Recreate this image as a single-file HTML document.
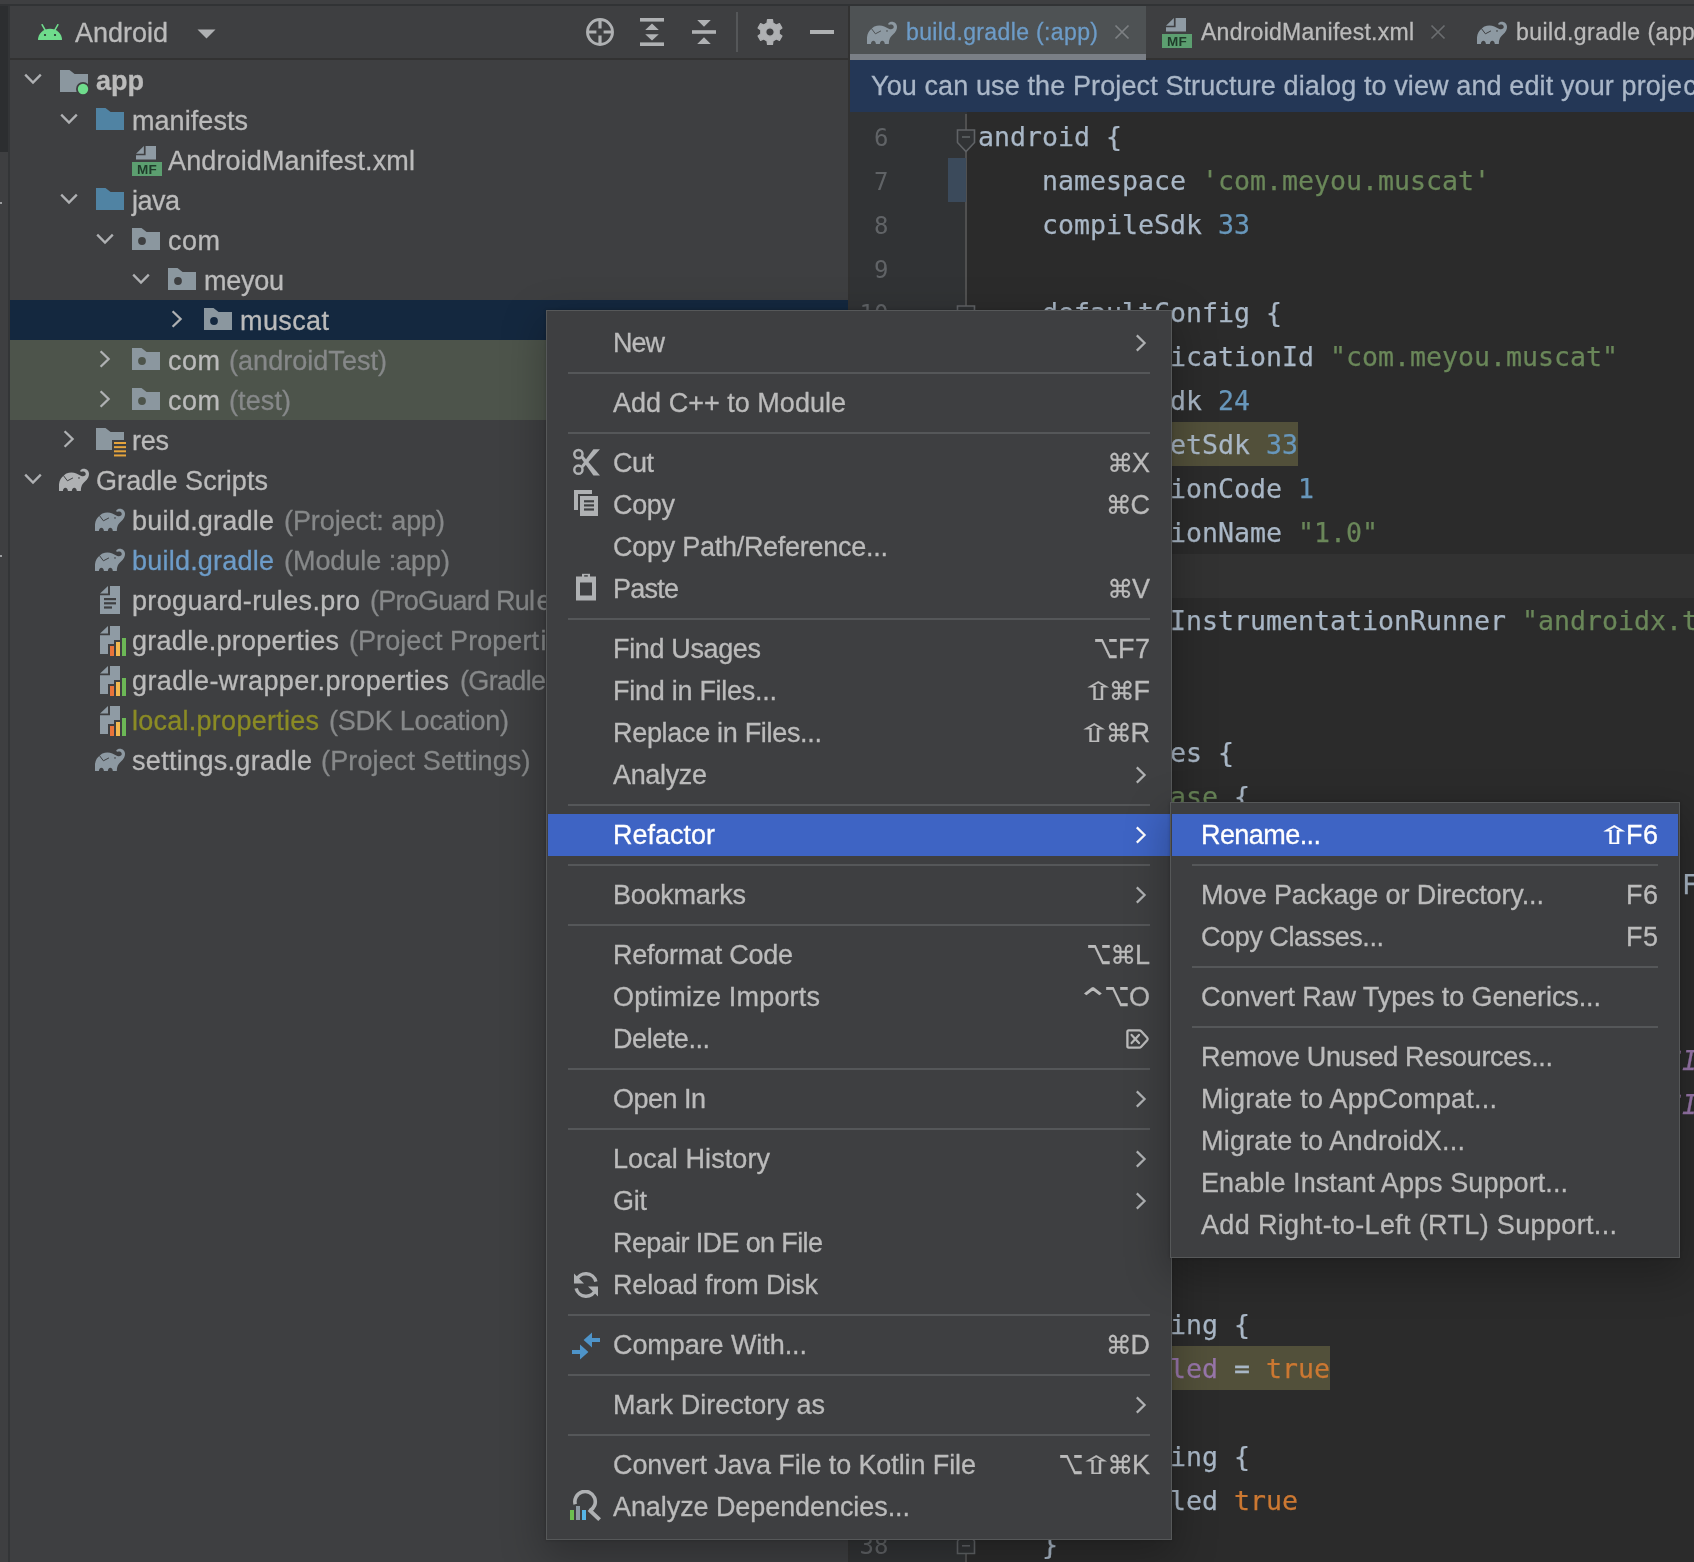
<!DOCTYPE html>
<html lang="en"><head><meta charset="utf-8"><title>Android Studio</title>
<style>
html,body{margin:0;padding:0;background:#3e3f41;}
#root{position:relative;width:1694px;height:1562px;overflow:hidden;background:#3e3f41;font-family:"Liberation Sans","DejaVu Sans",sans-serif;will-change:transform;}
.r{position:absolute;display:block}
.t{position:absolute;white-space:pre;font-family:"Liberation Sans","DejaVu Sans",sans-serif;-webkit-text-stroke:0.3px currentColor;}
.m{font-family:"DejaVu Sans Mono","Liberation Mono",monospace;-webkit-text-stroke:0.25px currentColor;}
.k{display:inline-block;text-align:center;letter-spacing:0;font-size:26px;font-family:"DejaVu Sans",sans-serif;-webkit-text-stroke:0.2px currentColor}
.clip{position:absolute;overflow:hidden}
</style></head>
<body><div id="root">
<div class="r" style="left:0px;top:0px;width:1694px;height:4px;background:#3e3f41;"></div>
<div class="r" style="left:0px;top:4px;width:1694px;height:2px;background:#313335;"></div>
<div class="r" style="left:0px;top:6px;width:8px;height:146px;background:#2c2e30;"></div>
<div class="r" style="left:0px;top:152px;width:8px;height:1410px;background:#3e3f41;"></div>
<div class="r" style="left:8px;top:6px;width:2px;height:1556px;background:#333537;"></div>
<div class="r" style="left:0px;top:202px;width:2px;height:2px;background:#9a9c9e;"></div>
<div class="r" style="left:0px;top:555px;width:2px;height:2px;background:#9a9c9e;"></div>
<div class="r" style="left:10px;top:6px;width:838px;height:1556px;background:#3e3f41;"></div>
<div class="r" style="left:10px;top:58px;width:838px;height:2px;background:#323232;"></div>
<div class="r" style="left:848px;top:6px;width:2px;height:1556px;background:#323232;"></div>
<svg class="r" style="left:38px;top:24px" width="24" height="17" viewBox="0 0 24 17"><path d="M0 16 A12 11.2 0 0 1 24 16 Z" fill="#6fdc8c"/><path d="M4.2 0.8 L7.6 6.8 M19.8 0.8 L16.4 6.8" stroke="#6fdc8c" stroke-width="1.6" stroke-linecap="round"/><circle cx="7" cy="11" r="1.1" fill="#2a2d2f"/><circle cx="17" cy="11" r="1.1" fill="#2a2d2f"/></svg>
<span id="t1" class="t " style="left:75px;top:7px;height:52px;line-height:52px;font-size:27px;color:#bbbbbb;letter-spacing:-0.013px;">Android</span>
<svg class="r" style="left:197px;top:29px" width="20" height="10" viewBox="0 0 20 10"><path d="M0.5 0.5 H18.5 L9.5 9.5 Z" fill="#afb1b3"/></svg>
<svg class="r" style="left:585px;top:17px" width="30" height="30" viewBox="0 0 30 30"><circle cx="15" cy="15" r="12.5" fill="none" stroke="#afb1b3" stroke-width="2.9"/><path d="M15 2 V11.4 M15 18.6 V28 M2 15 H11.4 M18.6 15 H28" stroke="#afb1b3" stroke-width="3.2"/></svg>
<svg class="r" style="left:640px;top:17px" width="24" height="30" viewBox="0 0 24 30"><rect x="0" y="1" width="24" height="3.6" fill="#afb1b3"/><rect x="0" y="25.4" width="24" height="3.6" fill="#afb1b3"/><path d="M5.2 13 H18.8 L12 6.6 Z M5.2 17.2 H18.8 L12 23.6 Z" fill="#afb1b3"/></svg>
<svg class="r" style="left:692px;top:17px" width="24" height="30" viewBox="0 0 24 30"><rect x="0" y="13.2" width="24" height="3.6" fill="#afb1b3"/><path d="M5.2 3 H18.8 L12 9.8 Z M5.2 27 H18.8 L12 20.2 Z" fill="#afb1b3"/></svg>
<div class="r" style="left:736px;top:12px;width:2px;height:40px;background:#555759;"></div>
<svg class="r" style="left:755px;top:17px" width="30" height="30" viewBox="0 0 30 30"><path d="M12.04 6.08 L12.50 2.65 L17.50 2.65 L17.96 6.08 L21.25 7.98 L24.44 6.66 L26.95 10.99 L24.21 13.10 L24.21 16.90 L26.95 19.01 L24.44 23.34 L21.25 22.02 L17.96 23.92 L17.50 27.35 L12.50 27.35 L12.04 23.92 L8.75 22.02 L5.56 23.34 L3.05 19.01 L5.79 16.90 L5.79 13.10 L3.05 10.99 L5.56 6.66 L8.75 7.98 Z M10.80 15.00 a4.2 4.2 0 1 0 8.4 0 a4.2 4.2 0 1 0 -8.4 0 Z" fill="#afb1b3" fill-rule="evenodd" stroke="#afb1b3" stroke-width="1.2" stroke-linejoin="round"/></svg>
<div class="r" style="left:810px;top:30px;width:24px;height:4px;background:#afb1b3;"></div>
<div class="r" style="left:10px;top:300px;width:838px;height:40px;background:#14283f;"></div>
<div class="r" style="left:10px;top:340px;width:838px;height:80px;background:#4d544b;"></div>
<svg class="r" style="left:24px;top:73px" width="18" height="12" viewBox="0 0 18 12"><path d="M1.2 1.6 L9 9.6 L16.8 1.6" fill="none" stroke="#afb1b3" stroke-width="2.3"/></svg>
<svg class="r" style="left:60px;top:70px" width="30" height="26" viewBox="0 0 30 26"><path d="M0 0 H9.5 L14.6 4 H28 V22 H0 Z" fill="#8b979f"/><circle cx="23" cy="19" r="7" fill="#3e3f41"/><circle cx="23" cy="19" r="5.2" fill="#6fdc8c"/></svg>
<span id="t2" class="t " style="left:96px;top:61px;height:40px;line-height:40px;font-size:27px;color:#bbbbbb;letter-spacing:-0.008px;font-weight:bold;">app</span>
<svg class="r" style="left:60px;top:113px" width="18" height="12" viewBox="0 0 18 12"><path d="M1.2 1.6 L9 9.6 L16.8 1.6" fill="none" stroke="#afb1b3" stroke-width="2.3"/></svg>
<svg class="r" style="left:96px;top:108px" width="28" height="22" viewBox="0 0 28 22"><path d="M0 0 H9.5 L14.6 4 H28 V22 H0 Z" fill="#5083a3"/></svg>
<span id="t3" class="t " style="left:132px;top:101px;height:40px;line-height:40px;font-size:27px;color:#bbbbbb;letter-spacing:0.056px;">manifests</span>
<svg class="r" style="left:132px;top:146px" width="30" height="30" viewBox="0 0 30 30"><path d="M13.6 0 H24 V13.6 H4 V9.3 H13.6 Z" fill="#8f9ba4"/><path d="M4 7.7 L11.9 0 V7.7 Z" fill="#8f9ba4"/><rect x="0" y="16" width="30" height="14" fill="#5c9f70"/><text x="15" y="28.2" text-anchor="middle" font-family="Liberation Sans,sans-serif" font-weight="bold" font-size="13.5" fill="#1f3a2a" letter-spacing="0.3">MF</text></svg>
<span id="t4" class="t " style="left:168px;top:141px;height:40px;line-height:40px;font-size:27px;color:#bbbbbb;letter-spacing:0.133px;">AndroidManifest.xml</span>
<svg class="r" style="left:60px;top:193px" width="18" height="12" viewBox="0 0 18 12"><path d="M1.2 1.6 L9 9.6 L16.8 1.6" fill="none" stroke="#afb1b3" stroke-width="2.3"/></svg>
<svg class="r" style="left:96px;top:188px" width="28" height="22" viewBox="0 0 28 22"><path d="M0 0 H9.5 L14.6 4 H28 V22 H0 Z" fill="#5083a3"/></svg>
<span id="t5" class="t " style="left:132px;top:181px;height:40px;line-height:40px;font-size:27px;color:#bbbbbb;letter-spacing:-0.515px;">java</span>
<svg class="r" style="left:96px;top:233px" width="18" height="12" viewBox="0 0 18 12"><path d="M1.2 1.6 L9 9.6 L16.8 1.6" fill="none" stroke="#afb1b3" stroke-width="2.3"/></svg>
<svg class="r" style="left:132px;top:228px" width="28" height="22" viewBox="0 0 28 22"><path d="M0 0 H9.5 L14.6 4 H28 V22 H0 Z" fill="#8b979f"/><circle cx="10" cy="13" r="3.9" fill="#3e3f41"/></svg>
<span id="t6" class="t " style="left:168px;top:221px;height:40px;line-height:40px;font-size:27px;color:#bbbbbb;letter-spacing:0.491px;">com</span>
<svg class="r" style="left:132px;top:273px" width="18" height="12" viewBox="0 0 18 12"><path d="M1.2 1.6 L9 9.6 L16.8 1.6" fill="none" stroke="#afb1b3" stroke-width="2.3"/></svg>
<svg class="r" style="left:168px;top:268px" width="28" height="22" viewBox="0 0 28 22"><path d="M0 0 H9.5 L14.6 4 H28 V22 H0 Z" fill="#8b979f"/><circle cx="10" cy="13" r="3.9" fill="#3e3f41"/></svg>
<span id="t7" class="t " style="left:204px;top:261px;height:40px;line-height:40px;font-size:27px;color:#bbbbbb;letter-spacing:-0.264px;">meyou</span>
<svg class="r" style="left:171px;top:310px" width="12" height="18" viewBox="0 0 12 18"><path d="M1.6 1.2 L9.6 9 L1.6 16.8" fill="none" stroke="#afb1b3" stroke-width="2.3"/></svg>
<svg class="r" style="left:204px;top:308px" width="28" height="22" viewBox="0 0 28 22"><path d="M0 0 H9.5 L14.6 4 H28 V22 H0 Z" fill="#8b979f"/><circle cx="10" cy="13" r="3.9" fill="#14283f"/></svg>
<span id="t8" class="t " style="left:240px;top:301px;height:40px;line-height:40px;font-size:27px;color:#bbbbbb;letter-spacing:0.393px;">muscat</span>
<svg class="r" style="left:99px;top:350px" width="12" height="18" viewBox="0 0 12 18"><path d="M1.6 1.2 L9.6 9 L1.6 16.8" fill="none" stroke="#afb1b3" stroke-width="2.3"/></svg>
<svg class="r" style="left:132px;top:348px" width="28" height="22" viewBox="0 0 28 22"><path d="M0 0 H9.5 L14.6 4 H28 V22 H0 Z" fill="#8b979f"/><circle cx="10" cy="13" r="3.9" fill="#4d544b"/></svg>
<span id="t9" class="t " style="left:168px;top:341px;height:40px;line-height:40px;font-size:27px;color:#bbbbbb;letter-spacing:0.491px;">com</span>
<span id="t10" class="t " style="left:229px;top:341px;height:40px;line-height:40px;font-size:27px;color:#868889;letter-spacing:0.035px;">(androidTest)</span>
<svg class="r" style="left:99px;top:390px" width="12" height="18" viewBox="0 0 12 18"><path d="M1.6 1.2 L9.6 9 L1.6 16.8" fill="none" stroke="#afb1b3" stroke-width="2.3"/></svg>
<svg class="r" style="left:132px;top:388px" width="28" height="22" viewBox="0 0 28 22"><path d="M0 0 H9.5 L14.6 4 H28 V22 H0 Z" fill="#8b979f"/><circle cx="10" cy="13" r="3.9" fill="#4d544b"/></svg>
<span id="t11" class="t " style="left:168px;top:381px;height:40px;line-height:40px;font-size:27px;color:#bbbbbb;letter-spacing:0.491px;">com</span>
<span id="t12" class="t " style="left:229px;top:381px;height:40px;line-height:40px;font-size:27px;color:#868889;letter-spacing:0.098px;">(test)</span>
<svg class="r" style="left:63px;top:430px" width="12" height="18" viewBox="0 0 12 18"><path d="M1.6 1.2 L9.6 9 L1.6 16.8" fill="none" stroke="#afb1b3" stroke-width="2.3"/></svg>
<svg class="r" style="left:96px;top:428px" width="30" height="30" viewBox="0 0 30 30"><path d="M0 0 H9.5 L14.6 4 H28 V22 H0 Z" fill="#8b979f"/><rect x="16" y="12" width="14" height="18" fill="#3e3f41"/><rect x="18" y="14.00" width="12" height="2" fill="#e5a43c"/><rect x="18" y="18.15" width="12" height="2" fill="#e5a43c"/><rect x="18" y="22.30" width="12" height="2" fill="#e5a43c"/><rect x="18" y="26.45" width="12" height="2" fill="#e5a43c"/></svg>
<span id="t13" class="t " style="left:132px;top:421px;height:40px;line-height:40px;font-size:27px;color:#bbbbbb;letter-spacing:-0.259px;">res</span>
<svg class="r" style="left:24px;top:473px" width="18" height="12" viewBox="0 0 18 12"><path d="M1.2 1.6 L9 9.6 L16.8 1.6" fill="none" stroke="#afb1b3" stroke-width="2.3"/></svg>
<svg class="r" style="left:59px;top:468px" width="31" height="24" viewBox="0 -1 31 24"><path d="M0 22 C0 19 0 17 0 15.3 C0.3 11 2.5 8 4.9 6.4 C6 5.2 6.8 4.7 7.4 4.4 C9 3.7 10.8 3.4 12.4 3.4 C14.2 3.4 15.9 3.8 17.3 4.4 C19 5.1 20.6 6.2 22.3 6.9 C23.2 7.3 24 7.4 24.75 7.1 C26.2 6.6 26.9 5.6 26.7 4.65 C26.5 3.6 26.1 3.1 25.7 2.9 C24.8 2.4 23.4 2.6 22.3 2.8 C21.4 2.6 21 2 21.3 1.4 C22 0.3 23.4 -0.3 24.75 -0.3 C26.3 -0.3 27.6 0.2 28.5 1.2 C29.5 2.2 30 3.5 30 4.9 C30 6.1 29.7 7.3 29.2 8.4 C28.4 10 27.2 11.4 26 12.6 C24.6 14 23.4 15.2 22.8 16.6 C22.1 18.2 21.8 20 21.8 22 L17.8 22 C17.8 20.2 16.7 18.8 15.3 18.8 C13.9 18.8 12.85 20.2 12.85 22 L8.9 22 C8.9 20.2 7.8 18.8 6.4 18.8 C5 18.8 3.9 20.2 3.9 22 Z" fill="#afb1b3"/><path d="M4.7 6.9 L8.4 11.8 L13.6 9.1" fill="none" stroke="#3e3f41" stroke-width="1" stroke-linecap="round" stroke-linejoin="round"/><circle cx="20" cy="8.9" r="0.9" fill="#3e3f41" fill-opacity="0.75"/></svg>
<span id="t14" class="t " style="left:96px;top:461px;height:40px;line-height:40px;font-size:27px;color:#bbbbbb;letter-spacing:0.072px;">Gradle Scripts</span>
<svg class="r" style="left:95px;top:508px" width="31" height="24" viewBox="0 -1 31 24"><path d="M0 22 C0 19 0 17 0 15.3 C0.3 11 2.5 8 4.9 6.4 C6 5.2 6.8 4.7 7.4 4.4 C9 3.7 10.8 3.4 12.4 3.4 C14.2 3.4 15.9 3.8 17.3 4.4 C19 5.1 20.6 6.2 22.3 6.9 C23.2 7.3 24 7.4 24.75 7.1 C26.2 6.6 26.9 5.6 26.7 4.65 C26.5 3.6 26.1 3.1 25.7 2.9 C24.8 2.4 23.4 2.6 22.3 2.8 C21.4 2.6 21 2 21.3 1.4 C22 0.3 23.4 -0.3 24.75 -0.3 C26.3 -0.3 27.6 0.2 28.5 1.2 C29.5 2.2 30 3.5 30 4.9 C30 6.1 29.7 7.3 29.2 8.4 C28.4 10 27.2 11.4 26 12.6 C24.6 14 23.4 15.2 22.8 16.6 C22.1 18.2 21.8 20 21.8 22 L17.8 22 C17.8 20.2 16.7 18.8 15.3 18.8 C13.9 18.8 12.85 20.2 12.85 22 L8.9 22 C8.9 20.2 7.8 18.8 6.4 18.8 C5 18.8 3.9 20.2 3.9 22 Z" fill="#8d99a2"/><path d="M4.7 6.9 L8.4 11.8 L13.6 9.1" fill="none" stroke="#3e3f41" stroke-width="1" stroke-linecap="round" stroke-linejoin="round"/><circle cx="20" cy="8.9" r="0.9" fill="#3e3f41" fill-opacity="0.75"/></svg>
<span id="t15" class="t " style="left:132px;top:501px;height:40px;line-height:40px;font-size:27px;color:#bbbbbb;letter-spacing:0.217px;">build.gradle</span>
<span id="t16" class="t " style="left:284px;top:501px;height:40px;line-height:40px;font-size:27px;color:#868889;letter-spacing:-0.082px;">(Project: app)</span>
<svg class="r" style="left:95px;top:548px" width="31" height="24" viewBox="0 -1 31 24"><path d="M0 22 C0 19 0 17 0 15.3 C0.3 11 2.5 8 4.9 6.4 C6 5.2 6.8 4.7 7.4 4.4 C9 3.7 10.8 3.4 12.4 3.4 C14.2 3.4 15.9 3.8 17.3 4.4 C19 5.1 20.6 6.2 22.3 6.9 C23.2 7.3 24 7.4 24.75 7.1 C26.2 6.6 26.9 5.6 26.7 4.65 C26.5 3.6 26.1 3.1 25.7 2.9 C24.8 2.4 23.4 2.6 22.3 2.8 C21.4 2.6 21 2 21.3 1.4 C22 0.3 23.4 -0.3 24.75 -0.3 C26.3 -0.3 27.6 0.2 28.5 1.2 C29.5 2.2 30 3.5 30 4.9 C30 6.1 29.7 7.3 29.2 8.4 C28.4 10 27.2 11.4 26 12.6 C24.6 14 23.4 15.2 22.8 16.6 C22.1 18.2 21.8 20 21.8 22 L17.8 22 C17.8 20.2 16.7 18.8 15.3 18.8 C13.9 18.8 12.85 20.2 12.85 22 L8.9 22 C8.9 20.2 7.8 18.8 6.4 18.8 C5 18.8 3.9 20.2 3.9 22 Z" fill="#8d99a2"/><path d="M4.7 6.9 L8.4 11.8 L13.6 9.1" fill="none" stroke="#3e3f41" stroke-width="1" stroke-linecap="round" stroke-linejoin="round"/><circle cx="20" cy="8.9" r="0.9" fill="#3e3f41" fill-opacity="0.75"/></svg>
<span id="t17" class="t " style="left:132px;top:541px;height:40px;line-height:40px;font-size:27px;color:#6d9cc8;letter-spacing:0.217px;">build.gradle</span>
<span id="t18" class="t " style="left:284px;top:541px;height:40px;line-height:40px;font-size:27px;color:#868889;letter-spacing:-0.049px;">(Module :app)</span>
<svg class="r" style="left:100px;top:586px" width="20" height="28" viewBox="0 0 20 28"><path d="M10 0 H20 V28 H0 V9.2 H10 Z" fill="#8f9ba4"/><path d="M0 7.4 L8 0 V7.4 Z" fill="#8f9ba4"/><rect x="4" y="12" width="12" height="2.2" fill="#3e3f41"/><rect x="4" y="16.2" width="12" height="2.2" fill="#3e3f41"/><rect x="4" y="20.4" width="8" height="2.2" fill="#3e3f41"/></svg>
<span id="t19" class="t " style="left:132px;top:581px;height:40px;line-height:40px;font-size:27px;color:#bbbbbb;letter-spacing:0.345px;">proguard-rules.pro</span>
<span id="t20" class="t " style="left:370px;top:581px;height:40px;line-height:40px;font-size:27px;color:#868889;letter-spacing:-0.756px;">(ProGuard Rul</span>
<span id="t21" class="t " style="left:536.5px;top:581px;height:40px;line-height:40px;font-size:27px;color:#868889;letter-spacing:0.500px;">es for app)</span>
<svg class="r" style="left:100px;top:626px" width="28" height="30" viewBox="0 0 28 30"><path d="M10 0 H20 V28 H0 V9.2 H10 Z" fill="#8f9ba4"/><path d="M0 7.4 L8 0 V7.4 Z" fill="#8f9ba4"/><path d="M8 30 V18 H14 V14 H20 V10 H28 V30 Z" fill="#3e3f41"/><rect x="10" y="20" width="4" height="10" fill="#e8743a"/><rect x="16" y="16" width="4" height="14" fill="#f2b950"/><rect x="22" y="12" width="4" height="18" fill="#6cb856"/></svg>
<span id="t22" class="t " style="left:132px;top:621px;height:40px;line-height:40px;font-size:27px;color:#bbbbbb;letter-spacing:0.273px;">gradle.properties</span>
<span id="t23" class="t " style="left:349px;top:621px;height:40px;line-height:40px;font-size:27px;color:#868889;letter-spacing:0.062px;">(Project Propert</span>
<span id="t24" class="t " style="left:540.5px;top:621px;height:40px;line-height:40px;font-size:27px;color:#868889;letter-spacing:0.500px;">ies)</span>
<svg class="r" style="left:100px;top:666px" width="28" height="30" viewBox="0 0 28 30"><path d="M10 0 H20 V28 H0 V9.2 H10 Z" fill="#8f9ba4"/><path d="M0 7.4 L8 0 V7.4 Z" fill="#8f9ba4"/><path d="M8 30 V18 H14 V14 H20 V10 H28 V30 Z" fill="#3e3f41"/><rect x="10" y="20" width="4" height="10" fill="#e8743a"/><rect x="16" y="16" width="4" height="14" fill="#f2b950"/><rect x="22" y="12" width="4" height="18" fill="#6cb856"/></svg>
<span id="t25" class="t " style="left:132px;top:661px;height:40px;line-height:40px;font-size:27px;color:#bbbbbb;letter-spacing:0.389px;">gradle-wrapper.properties</span>
<span id="t26" class="t " style="left:460px;top:661px;height:40px;line-height:40px;font-size:27px;color:#868889;letter-spacing:-0.672px;">(Gradle</span>
<span id="t27" class="t " style="left:547.5px;top:661px;height:40px;line-height:40px;font-size:27px;color:#868889;letter-spacing:0.500px;"> Version)</span>
<svg class="r" style="left:100px;top:706px" width="28" height="30" viewBox="0 0 28 30"><path d="M10 0 H20 V28 H0 V9.2 H10 Z" fill="#8f9ba4"/><path d="M0 7.4 L8 0 V7.4 Z" fill="#8f9ba4"/><path d="M8 30 V18 H14 V14 H20 V10 H28 V30 Z" fill="#3e3f41"/><rect x="10" y="20" width="4" height="10" fill="#e8743a"/><rect x="16" y="16" width="4" height="14" fill="#f2b950"/><rect x="22" y="12" width="4" height="18" fill="#6cb856"/></svg>
<span id="t28" class="t " style="left:132px;top:701px;height:40px;line-height:40px;font-size:27px;color:#8b8b25;letter-spacing:0.260px;">local.properties</span>
<span id="t29" class="t " style="left:329px;top:701px;height:40px;line-height:40px;font-size:27px;color:#868889;letter-spacing:-0.237px;">(SDK Location)</span>
<svg class="r" style="left:95px;top:748px" width="31" height="24" viewBox="0 -1 31 24"><path d="M0 22 C0 19 0 17 0 15.3 C0.3 11 2.5 8 4.9 6.4 C6 5.2 6.8 4.7 7.4 4.4 C9 3.7 10.8 3.4 12.4 3.4 C14.2 3.4 15.9 3.8 17.3 4.4 C19 5.1 20.6 6.2 22.3 6.9 C23.2 7.3 24 7.4 24.75 7.1 C26.2 6.6 26.9 5.6 26.7 4.65 C26.5 3.6 26.1 3.1 25.7 2.9 C24.8 2.4 23.4 2.6 22.3 2.8 C21.4 2.6 21 2 21.3 1.4 C22 0.3 23.4 -0.3 24.75 -0.3 C26.3 -0.3 27.6 0.2 28.5 1.2 C29.5 2.2 30 3.5 30 4.9 C30 6.1 29.7 7.3 29.2 8.4 C28.4 10 27.2 11.4 26 12.6 C24.6 14 23.4 15.2 22.8 16.6 C22.1 18.2 21.8 20 21.8 22 L17.8 22 C17.8 20.2 16.7 18.8 15.3 18.8 C13.9 18.8 12.85 20.2 12.85 22 L8.9 22 C8.9 20.2 7.8 18.8 6.4 18.8 C5 18.8 3.9 20.2 3.9 22 Z" fill="#8d99a2"/><path d="M4.7 6.9 L8.4 11.8 L13.6 9.1" fill="none" stroke="#3e3f41" stroke-width="1" stroke-linecap="round" stroke-linejoin="round"/><circle cx="20" cy="8.9" r="0.9" fill="#3e3f41" fill-opacity="0.75"/></svg>
<span id="t30" class="t " style="left:132px;top:741px;height:40px;line-height:40px;font-size:27px;color:#bbbbbb;letter-spacing:0.313px;">settings.gradle</span>
<span id="t31" class="t " style="left:321px;top:741px;height:40px;line-height:40px;font-size:27px;color:#868889;letter-spacing:0.142px;">(Project Settings)</span>
<div class="r" style="left:850px;top:6px;width:844px;height:54px;background:#3e3f41;"></div>
<div class="r" style="left:850px;top:6px;width:296px;height:48px;background:#4e5254;"></div>
<div class="r" style="left:850px;top:54px;width:296px;height:6px;background:#7a7f86;"></div>
<div class="r" style="left:1146px;top:58px;width:548px;height:2px;background:#323232;"></div>
<svg class="r" style="left:867px;top:20.5px" width="31" height="24" viewBox="0 -1 31 24"><path d="M0 22 C0 19 0 17 0 15.3 C0.3 11 2.5 8 4.9 6.4 C6 5.2 6.8 4.7 7.4 4.4 C9 3.7 10.8 3.4 12.4 3.4 C14.2 3.4 15.9 3.8 17.3 4.4 C19 5.1 20.6 6.2 22.3 6.9 C23.2 7.3 24 7.4 24.75 7.1 C26.2 6.6 26.9 5.6 26.7 4.65 C26.5 3.6 26.1 3.1 25.7 2.9 C24.8 2.4 23.4 2.6 22.3 2.8 C21.4 2.6 21 2 21.3 1.4 C22 0.3 23.4 -0.3 24.75 -0.3 C26.3 -0.3 27.6 0.2 28.5 1.2 C29.5 2.2 30 3.5 30 4.9 C30 6.1 29.7 7.3 29.2 8.4 C28.4 10 27.2 11.4 26 12.6 C24.6 14 23.4 15.2 22.8 16.6 C22.1 18.2 21.8 20 21.8 22 L17.8 22 C17.8 20.2 16.7 18.8 15.3 18.8 C13.9 18.8 12.85 20.2 12.85 22 L8.9 22 C8.9 20.2 7.8 18.8 6.4 18.8 C5 18.8 3.9 20.2 3.9 22 Z" fill="#8d99a2"/><path d="M4.7 6.9 L8.4 11.8 L13.6 9.1" fill="none" stroke="#4e5254" stroke-width="1" stroke-linecap="round" stroke-linejoin="round"/><circle cx="20" cy="8.9" r="0.9" fill="#4e5254" fill-opacity="0.75"/></svg>
<span id="t32" class="t " style="left:906px;top:6px;height:52px;line-height:52px;font-size:23px;color:#6d9cc8;letter-spacing:0.366px;">build.gradle (:app)</span>
<svg class="r" style="left:1114px;top:24px" width="16" height="16" viewBox="0 0 16 16"><path d="M1.5 1.5 L14.5 14.5 M14.5 1.5 L1.5 14.5" stroke="#7d8083" stroke-width="1.7" fill="none"/></svg>
<svg class="r" style="left:1162px;top:18px" width="30" height="30" viewBox="0 0 30 30"><path d="M13.6 0 H24 V13.6 H4 V9.3 H13.6 Z" fill="#8f9ba4"/><path d="M4 7.7 L11.9 0 V7.7 Z" fill="#8f9ba4"/><rect x="0" y="16" width="30" height="14" fill="#5c9f70"/><text x="15" y="28.2" text-anchor="middle" font-family="Liberation Sans,sans-serif" font-weight="bold" font-size="13.5" fill="#1f3a2a" letter-spacing="0.3">MF</text></svg>
<span id="t33" class="t " style="left:1201px;top:6px;height:52px;line-height:52px;font-size:23px;color:#bbbbbb;letter-spacing:0.258px;">AndroidManifest.xml</span>
<svg class="r" style="left:1430px;top:24px" width="16" height="16" viewBox="0 0 16 16"><path d="M1.5 1.5 L14.5 14.5 M14.5 1.5 L1.5 14.5" stroke="#6a6d6f" stroke-width="1.7" fill="none"/></svg>
<svg class="r" style="left:1477px;top:20.5px" width="31" height="24" viewBox="0 -1 31 24"><path d="M0 22 C0 19 0 17 0 15.3 C0.3 11 2.5 8 4.9 6.4 C6 5.2 6.8 4.7 7.4 4.4 C9 3.7 10.8 3.4 12.4 3.4 C14.2 3.4 15.9 3.8 17.3 4.4 C19 5.1 20.6 6.2 22.3 6.9 C23.2 7.3 24 7.4 24.75 7.1 C26.2 6.6 26.9 5.6 26.7 4.65 C26.5 3.6 26.1 3.1 25.7 2.9 C24.8 2.4 23.4 2.6 22.3 2.8 C21.4 2.6 21 2 21.3 1.4 C22 0.3 23.4 -0.3 24.75 -0.3 C26.3 -0.3 27.6 0.2 28.5 1.2 C29.5 2.2 30 3.5 30 4.9 C30 6.1 29.7 7.3 29.2 8.4 C28.4 10 27.2 11.4 26 12.6 C24.6 14 23.4 15.2 22.8 16.6 C22.1 18.2 21.8 20 21.8 22 L17.8 22 C17.8 20.2 16.7 18.8 15.3 18.8 C13.9 18.8 12.85 20.2 12.85 22 L8.9 22 C8.9 20.2 7.8 18.8 6.4 18.8 C5 18.8 3.9 20.2 3.9 22 Z" fill="#8d99a2"/><path d="M4.7 6.9 L8.4 11.8 L13.6 9.1" fill="none" stroke="#3e3f41" stroke-width="1" stroke-linecap="round" stroke-linejoin="round"/><circle cx="20" cy="8.9" r="0.9" fill="#3e3f41" fill-opacity="0.75"/></svg>
<span id="t34" class="t " style="left:1516px;top:6px;height:52px;line-height:52px;font-size:23px;color:#bbbbbb;letter-spacing:0.470px;">build.gradle (app)</span>
<div class="r" style="left:850px;top:60px;width:844px;height:52px;background:#243756;"></div>
<span id="t35" class="t " style="left:871px;top:60px;height:52px;line-height:52px;font-size:27px;color:#aab7c8;letter-spacing:0.112px;">You can use the Project Structure dialog to view and edit your proje</span>
<span id="t36" class="t " style="left:1683.2px;top:60px;height:52px;line-height:52px;font-size:27px;color:#aab7c8;letter-spacing:0.500px;">ct configuration</span>
<div class="r" style="left:850px;top:112px;width:116px;height:1450px;background:#313335;"></div>
<div class="r" style="left:965px;top:112px;width:2px;height:1450px;background:#505050;"></div>
<div class="r" style="left:967px;top:112px;width:727px;height:1450px;background:#2b2b2b;"></div>
<div class="r" style="left:965px;top:112px;width:2px;height:2px;background:#313335;"></div>
<div class="r" style="left:948px;top:158px;width:18px;height:44px;background:#3b4a5b;"></div>
<div class="r" style="left:967px;top:554px;width:727px;height:44px;background:#323232;"></div>
<div class="r" style="left:850px;top:554px;width:116px;height:44px;background:#323232;"></div>
<span class="t m" style="right:805.5px;top:116px;height:44px;line-height:44px;font-size:24px;color:#606366;-webkit-text-stroke:0">6</span>
<span class="t m" style="right:805.5px;top:160px;height:44px;line-height:44px;font-size:24px;color:#606366;-webkit-text-stroke:0">7</span>
<span class="t m" style="right:805.5px;top:204px;height:44px;line-height:44px;font-size:24px;color:#606366;-webkit-text-stroke:0">8</span>
<span class="t m" style="right:805.5px;top:248px;height:44px;line-height:44px;font-size:24px;color:#606366;-webkit-text-stroke:0">9</span>
<span class="t m" style="right:805.5px;top:292px;height:44px;line-height:44px;font-size:24px;color:#606366;-webkit-text-stroke:0">10</span>
<span class="t m" style="right:805.5px;top:336px;height:44px;line-height:44px;font-size:24px;color:#606366;-webkit-text-stroke:0">11</span>
<span class="t m" style="right:805.5px;top:380px;height:44px;line-height:44px;font-size:24px;color:#606366;-webkit-text-stroke:0">12</span>
<span class="t m" style="right:805.5px;top:424px;height:44px;line-height:44px;font-size:24px;color:#606366;-webkit-text-stroke:0">13</span>
<span class="t m" style="right:805.5px;top:468px;height:44px;line-height:44px;font-size:24px;color:#606366;-webkit-text-stroke:0">14</span>
<span class="t m" style="right:805.5px;top:512px;height:44px;line-height:44px;font-size:24px;color:#606366;-webkit-text-stroke:0">15</span>
<span class="t m" style="right:805.5px;top:556px;height:44px;line-height:44px;font-size:24px;color:#606366;-webkit-text-stroke:0">16</span>
<span class="t m" style="right:805.5px;top:600px;height:44px;line-height:44px;font-size:24px;color:#606366;-webkit-text-stroke:0">17</span>
<span class="t m" style="right:805.5px;top:644px;height:44px;line-height:44px;font-size:24px;color:#606366;-webkit-text-stroke:0">18</span>
<span class="t m" style="right:805.5px;top:688px;height:44px;line-height:44px;font-size:24px;color:#606366;-webkit-text-stroke:0">19</span>
<span class="t m" style="right:805.5px;top:732px;height:44px;line-height:44px;font-size:24px;color:#606366;-webkit-text-stroke:0">20</span>
<span class="t m" style="right:805.5px;top:776px;height:44px;line-height:44px;font-size:24px;color:#606366;-webkit-text-stroke:0">21</span>
<span class="t m" style="right:805.5px;top:820px;height:44px;line-height:44px;font-size:24px;color:#606366;-webkit-text-stroke:0">22</span>
<span class="t m" style="right:805.5px;top:864px;height:44px;line-height:44px;font-size:24px;color:#606366;-webkit-text-stroke:0">23</span>
<span class="t m" style="right:805.5px;top:908px;height:44px;line-height:44px;font-size:24px;color:#606366;-webkit-text-stroke:0">24</span>
<span class="t m" style="right:805.5px;top:952px;height:44px;line-height:44px;font-size:24px;color:#606366;-webkit-text-stroke:0">25</span>
<span class="t m" style="right:805.5px;top:996px;height:44px;line-height:44px;font-size:24px;color:#606366;-webkit-text-stroke:0">26</span>
<span class="t m" style="right:805.5px;top:1040px;height:44px;line-height:44px;font-size:24px;color:#606366;-webkit-text-stroke:0">27</span>
<span class="t m" style="right:805.5px;top:1084px;height:44px;line-height:44px;font-size:24px;color:#606366;-webkit-text-stroke:0">28</span>
<span class="t m" style="right:805.5px;top:1128px;height:44px;line-height:44px;font-size:24px;color:#606366;-webkit-text-stroke:0">29</span>
<span class="t m" style="right:805.5px;top:1172px;height:44px;line-height:44px;font-size:24px;color:#606366;-webkit-text-stroke:0">30</span>
<span class="t m" style="right:805.5px;top:1216px;height:44px;line-height:44px;font-size:24px;color:#606366;-webkit-text-stroke:0">31</span>
<span class="t m" style="right:805.5px;top:1260px;height:44px;line-height:44px;font-size:24px;color:#606366;-webkit-text-stroke:0">32</span>
<span class="t m" style="right:805.5px;top:1304px;height:44px;line-height:44px;font-size:24px;color:#606366;-webkit-text-stroke:0">33</span>
<span class="t m" style="right:805.5px;top:1348px;height:44px;line-height:44px;font-size:24px;color:#606366;-webkit-text-stroke:0">34</span>
<span class="t m" style="right:805.5px;top:1392px;height:44px;line-height:44px;font-size:24px;color:#606366;-webkit-text-stroke:0">35</span>
<span class="t m" style="right:805.5px;top:1436px;height:44px;line-height:44px;font-size:24px;color:#606366;-webkit-text-stroke:0">36</span>
<span class="t m" style="right:805.5px;top:1480px;height:44px;line-height:44px;font-size:24px;color:#606366;-webkit-text-stroke:0">37</span>
<span class="t m" style="right:805.5px;top:1524px;height:44px;line-height:44px;font-size:24px;color:#606366;-webkit-text-stroke:0">38</span>
<span class="t m" style="right:805.5px;top:1568px;height:44px;line-height:44px;font-size:24px;color:#606366;-webkit-text-stroke:0">39</span>
<span class="t m" style="left:978px;top:115px;height:44px;line-height:44px;font-size:26.58px;color:#a9b7c6;">android {</span>
<span class="t m" style="left:1042px;top:159px;height:44px;line-height:44px;font-size:26.58px;color:#a9b7c6;">namespace </span>
<span class="t m" style="left:1202px;top:159px;height:44px;line-height:44px;font-size:26.58px;color:#6a8759;">&#x27;com.meyou.muscat&#x27;</span>
<span class="t m" style="left:1042px;top:203px;height:44px;line-height:44px;font-size:26.58px;color:#a9b7c6;">compileSdk </span>
<span class="t m" style="left:1218px;top:203px;height:44px;line-height:44px;font-size:26.58px;color:#6897bb;">33</span>
<span class="t m" style="left:1042px;top:291px;height:44px;line-height:44px;font-size:26.58px;color:#a9b7c6;">defaultConfig {</span>
<span class="t m" style="left:1106px;top:335px;height:44px;line-height:44px;font-size:26.58px;color:#a9b7c6;">applicationId </span>
<span class="t m" style="left:1330px;top:335px;height:44px;line-height:44px;font-size:26.58px;color:#6a8759;">&quot;com.meyou.muscat&quot;</span>
<span class="t m" style="left:1106px;top:379px;height:44px;line-height:44px;font-size:26.58px;color:#a9b7c6;">minSdk </span>
<span class="t m" style="left:1218px;top:379px;height:44px;line-height:44px;font-size:26.58px;color:#6897bb;">24</span>
<div class="r" style="left:1106.0px;top:422px;width:192.0px;height:44px;background:#52503a;"></div>
<span class="t m" style="left:1106px;top:423px;height:44px;line-height:44px;font-size:26.58px;color:#a9b7c6;">targetSdk </span>
<span class="t m" style="left:1266px;top:423px;height:44px;line-height:44px;font-size:26.58px;color:#6897bb;">33</span>
<span class="t m" style="left:1106px;top:467px;height:44px;line-height:44px;font-size:26.58px;color:#a9b7c6;">versionCode </span>
<span class="t m" style="left:1298px;top:467px;height:44px;line-height:44px;font-size:26.58px;color:#6897bb;">1</span>
<span class="t m" style="left:1106px;top:511px;height:44px;line-height:44px;font-size:26.58px;color:#a9b7c6;">versionName </span>
<span class="t m" style="left:1298px;top:511px;height:44px;line-height:44px;font-size:26.58px;color:#6a8759;">&quot;1.0&quot;</span>
<span class="t m" style="left:1106px;top:599px;height:44px;line-height:44px;font-size:26.58px;color:#a9b7c6;">testInstrumentationRunner </span>
<span class="t m" style="left:1522px;top:599px;height:44px;line-height:44px;font-size:26.58px;color:#6a8759;">&quot;androidx.test.runner.AndroidJUnitRunner&quot;</span>
<span class="t m" style="left:1042px;top:643px;height:44px;line-height:44px;font-size:26.58px;color:#a9b7c6;">}</span>
<span class="t m" style="left:1042px;top:731px;height:44px;line-height:44px;font-size:26.58px;color:#a9b7c6;">buildTypes {</span>
<span class="t m" style="left:1106px;top:775px;height:44px;line-height:44px;font-size:26.58px;color:#6a8759;">release</span>
<span class="t m" style="left:1218px;top:775px;height:44px;line-height:44px;font-size:26.58px;color:#a9b7c6;"> {</span>
<span class="t m" style="left:1170px;top:819px;height:44px;line-height:44px;font-size:26.58px;color:#a9b7c6;">minifyEnabled </span>
<span class="t m" style="left:1394px;top:819px;height:44px;line-height:44px;font-size:26.58px;color:#cc7832;">false</span>
<span class="t m" style="left:1170px;top:863px;height:44px;line-height:44px;font-size:26.58px;color:#a9b7c6;">proguardFiles getDefaultProguardFile(</span>
<span class="t m" style="left:1762px;top:863px;height:44px;line-height:44px;font-size:26.58px;color:#6a8759;">&#x27;proguard-android-optimize.txt&#x27;</span>
<span class="t m" style="left:2258px;top:863px;height:44px;line-height:44px;font-size:26.58px;color:#a9b7c6;">), </span>
<span class="t m" style="left:2306px;top:863px;height:44px;line-height:44px;font-size:26.58px;color:#6a8759;">&#x27;proguard-rules.pro&#x27;</span>
<span class="t m" style="left:1106px;top:907px;height:44px;line-height:44px;font-size:26.58px;color:#a9b7c6;">}</span>
<span class="t m" style="left:1042px;top:951px;height:44px;line-height:44px;font-size:26.58px;color:#a9b7c6;">}</span>
<span class="t m" style="left:1042px;top:995px;height:44px;line-height:44px;font-size:26.58px;color:#a9b7c6;">compileOptions {</span>
<span class="t m" style="left:1106px;top:1039px;height:44px;line-height:44px;font-size:26.58px;color:#a9b7c6;">sourceCompatibility JavaVersion.</span>
<span class="t m" style="left:1618px;top:1039px;height:44px;line-height:44px;font-size:26.58px;color:#9876aa;font-style:italic;">VERSION_1_8</span>
<span class="t m" style="left:1106px;top:1083px;height:44px;line-height:44px;font-size:26.58px;color:#a9b7c6;">targetCompatibility JavaVersion.</span>
<span class="t m" style="left:1618px;top:1083px;height:44px;line-height:44px;font-size:26.58px;color:#9876aa;font-style:italic;">VERSION_1_8</span>
<span class="t m" style="left:1042px;top:1127px;height:44px;line-height:44px;font-size:26.58px;color:#a9b7c6;">}</span>
<span class="t m" style="left:1042px;top:1171px;height:44px;line-height:44px;font-size:26.58px;color:#a9b7c6;">kotlinOptions {</span>
<span class="t m" style="left:1106px;top:1215px;height:44px;line-height:44px;font-size:26.58px;color:#a9b7c6;">jvmTarget = </span>
<span class="t m" style="left:1298px;top:1215px;height:44px;line-height:44px;font-size:26.58px;color:#6a8759;">&#x27;1.8&#x27;</span>
<span class="t m" style="left:1042px;top:1259px;height:44px;line-height:44px;font-size:26.58px;color:#a9b7c6;">}</span>
<span class="t m" style="left:1042px;top:1303px;height:44px;line-height:44px;font-size:26.58px;color:#a9b7c6;">dataBinding {</span>
<div class="r" style="left:1106.0px;top:1346px;width:224.0px;height:44px;background:#52503a;"></div>
<span class="t m" style="left:1106px;top:1347px;height:44px;line-height:44px;font-size:26.58px;color:#9876aa;">enabled</span>
<span class="t m" style="left:1218px;top:1347px;height:44px;line-height:44px;font-size:26.58px;color:#a9b7c6;"> = </span>
<span class="t m" style="left:1266px;top:1347px;height:44px;line-height:44px;font-size:26.58px;color:#cc7832;">true</span>
<span class="t m" style="left:1042px;top:1391px;height:44px;line-height:44px;font-size:26.58px;color:#a9b7c6;">}</span>
<span class="t m" style="left:1042px;top:1435px;height:44px;line-height:44px;font-size:26.58px;color:#a9b7c6;">viewBinding {</span>
<span class="t m" style="left:1106px;top:1479px;height:44px;line-height:44px;font-size:26.58px;color:#a9b7c6;">enabled </span>
<span class="t m" style="left:1234px;top:1479px;height:44px;line-height:44px;font-size:26.58px;color:#cc7832;">true</span>
<span class="t m" style="left:1042px;top:1523px;height:44px;line-height:44px;font-size:26.58px;color:#a9b7c6;">}</span>
<svg class="r" style="left:956px;top:129px" width="20" height="25" viewBox="0 0 20 25"><path d="M1.5 1 H18.5 V13.5 L10 22.5 L1.5 13.5 Z" fill="#313335" stroke="#606366" stroke-width="1.6"/><path d="M6 8 H14" stroke="#606366" stroke-width="1.6"/></svg>
<svg class="r" style="left:956px;top:305px" width="20" height="25" viewBox="0 0 20 25"><path d="M1.5 1 H18.5 V13.5 L10 22.5 L1.5 13.5 Z" fill="#313335" stroke="#606366" stroke-width="1.6"/><path d="M6 8 H14" stroke="#606366" stroke-width="1.6"/></svg>
<svg class="r" style="left:956px;top:745px" width="20" height="25" viewBox="0 0 20 25"><path d="M1.5 1 H18.5 V13.5 L10 22.5 L1.5 13.5 Z" fill="#313335" stroke="#606366" stroke-width="1.6"/><path d="M6 8 H14" stroke="#606366" stroke-width="1.6"/></svg>
<svg class="r" style="left:956px;top:789px" width="20" height="25" viewBox="0 0 20 25"><path d="M1.5 1 H18.5 V13.5 L10 22.5 L1.5 13.5 Z" fill="#313335" stroke="#606366" stroke-width="1.6"/><path d="M6 8 H14" stroke="#606366" stroke-width="1.6"/></svg>
<svg class="r" style="left:956px;top:1009px" width="20" height="25" viewBox="0 0 20 25"><path d="M1.5 1 H18.5 V13.5 L10 22.5 L1.5 13.5 Z" fill="#313335" stroke="#606366" stroke-width="1.6"/><path d="M6 8 H14" stroke="#606366" stroke-width="1.6"/></svg>
<svg class="r" style="left:956px;top:1185px" width="20" height="25" viewBox="0 0 20 25"><path d="M1.5 1 H18.5 V13.5 L10 22.5 L1.5 13.5 Z" fill="#313335" stroke="#606366" stroke-width="1.6"/><path d="M6 8 H14" stroke="#606366" stroke-width="1.6"/></svg>
<svg class="r" style="left:956px;top:1317px" width="20" height="25" viewBox="0 0 20 25"><path d="M1.5 1 H18.5 V13.5 L10 22.5 L1.5 13.5 Z" fill="#313335" stroke="#606366" stroke-width="1.6"/><path d="M6 8 H14" stroke="#606366" stroke-width="1.6"/></svg>
<svg class="r" style="left:956px;top:1449px" width="20" height="25" viewBox="0 0 20 25"><path d="M1.5 1 H18.5 V13.5 L10 22.5 L1.5 13.5 Z" fill="#313335" stroke="#606366" stroke-width="1.6"/><path d="M6 8 H14" stroke="#606366" stroke-width="1.6"/></svg>
<svg class="r" style="left:956px;top:650px" width="20" height="25" viewBox="0 0 20 25"><path d="M1.5 23.5 H18.5 V11 L10 2 L1.5 11 Z" fill="#313335" stroke="#606366" stroke-width="1.6"/><path d="M6 15.8 H14" stroke="#606366" stroke-width="1.6"/></svg>
<svg class="r" style="left:956px;top:914px" width="20" height="25" viewBox="0 0 20 25"><path d="M1.5 23.5 H18.5 V11 L10 2 L1.5 11 Z" fill="#313335" stroke="#606366" stroke-width="1.6"/><path d="M6 15.8 H14" stroke="#606366" stroke-width="1.6"/></svg>
<svg class="r" style="left:956px;top:958px" width="20" height="25" viewBox="0 0 20 25"><path d="M1.5 23.5 H18.5 V11 L10 2 L1.5 11 Z" fill="#313335" stroke="#606366" stroke-width="1.6"/><path d="M6 15.8 H14" stroke="#606366" stroke-width="1.6"/></svg>
<svg class="r" style="left:956px;top:1134px" width="20" height="25" viewBox="0 0 20 25"><path d="M1.5 23.5 H18.5 V11 L10 2 L1.5 11 Z" fill="#313335" stroke="#606366" stroke-width="1.6"/><path d="M6 15.8 H14" stroke="#606366" stroke-width="1.6"/></svg>
<svg class="r" style="left:956px;top:1266px" width="20" height="25" viewBox="0 0 20 25"><path d="M1.5 23.5 H18.5 V11 L10 2 L1.5 11 Z" fill="#313335" stroke="#606366" stroke-width="1.6"/><path d="M6 15.8 H14" stroke="#606366" stroke-width="1.6"/></svg>
<svg class="r" style="left:956px;top:1398px" width="20" height="25" viewBox="0 0 20 25"><path d="M1.5 23.5 H18.5 V11 L10 2 L1.5 11 Z" fill="#313335" stroke="#606366" stroke-width="1.6"/><path d="M6 15.8 H14" stroke="#606366" stroke-width="1.6"/></svg>
<svg class="r" style="left:956px;top:1530px" width="20" height="25" viewBox="0 0 20 25"><path d="M1.5 23.5 H18.5 V11 L10 2 L1.5 11 Z" fill="#313335" stroke="#606366" stroke-width="1.6"/><path d="M6 15.8 H14" stroke="#606366" stroke-width="1.6"/></svg>
<div class="r" style="left:546px;top:310px;width:626px;height:1230px;background:#3e3f41;box-sizing:border-box;border:1px solid #565859;box-shadow:0 14px 38px 4px rgba(0,0,0,0.25),0 0 3px rgba(0,0,0,0.22)"></div>
<span id="t37" class="t " style="left:613px;top:322px;height:42px;line-height:42px;font-size:27px;color:#bbbbbb;letter-spacing:-1.013px;">New</span>
<svg class="r" style="left:1135px;top:334px" width="12" height="18" viewBox="0 0 12 18"><path d="M1.8 1.4 L9.6 9 L1.8 16.6" fill="none" stroke="#afb1b3" stroke-width="2.2"/></svg>
<div class="r" style="left:568px;top:372px;width:582px;height:2px;background:#555759;"></div>
<span id="t38" class="t " style="left:613px;top:382px;height:42px;line-height:42px;font-size:27px;color:#bbbbbb;letter-spacing:0.021px;">Add C++ to Module</span>
<div class="r" style="left:568px;top:432px;width:582px;height:2px;background:#555759;"></div>
<span id="t39" class="t " style="left:613px;top:442px;height:42px;line-height:42px;font-size:27px;color:#bbbbbb;letter-spacing:-0.515px;">Cut</span>
<span class="t" style="right:543.4px;top:442px;height:42px;line-height:42px;font-size:27px;color:#bbbbbb;letter-spacing:0.6px;"><span class="k" style="margin:0 -1.2px;transform:scale(1.0,0.97);transform-origin:50% 71%;">⌘</span>X</span>
<span id="t40" class="t " style="left:613px;top:484px;height:42px;line-height:42px;font-size:27px;color:#bbbbbb;letter-spacing:-0.344px;">Copy</span>
<span class="t" style="right:543.4px;top:484px;height:42px;line-height:42px;font-size:27px;color:#bbbbbb;letter-spacing:0.6px;"><span class="k" style="margin:0 -1.2px;transform:scale(1.0,0.97);transform-origin:50% 71%;">⌘</span>C</span>
<span id="t41" class="t " style="left:613px;top:526px;height:42px;line-height:42px;font-size:27px;color:#bbbbbb;letter-spacing:-0.270px;">Copy Path/Reference...</span>
<span id="t42" class="t " style="left:613px;top:568px;height:42px;line-height:42px;font-size:27px;color:#bbbbbb;letter-spacing:-0.764px;">Paste</span>
<span class="t" style="right:543.4px;top:568px;height:42px;line-height:42px;font-size:27px;color:#bbbbbb;letter-spacing:0.6px;"><span class="k" style="margin:0 -1.2px;transform:scale(1.0,0.97);transform-origin:50% 71%;">⌘</span>V</span>
<div class="r" style="left:568px;top:618px;width:582px;height:2px;background:#555759;"></div>
<span id="t43" class="t " style="left:613px;top:628px;height:42px;line-height:42px;font-size:27px;color:#bbbbbb;letter-spacing:-0.358px;">Find Usages</span>
<span class="t" style="right:543.4px;top:628px;height:42px;line-height:42px;font-size:27px;color:#bbbbbb;letter-spacing:0.6px;"><span class="k" style="margin:0 -2.8px;transform:scale(0.82,1.27);transform-origin:50% 71%;">⌥</span>F7</span>
<span id="t44" class="t " style="left:613px;top:670px;height:42px;line-height:42px;font-size:27px;color:#bbbbbb;letter-spacing:-0.270px;">Find in Files...</span>
<span class="t" style="right:543.4px;top:670px;height:42px;line-height:42px;font-size:27px;color:#bbbbbb;letter-spacing:0.6px;"><span class="k" style="margin:0 1.6px;transform:scale(1.63,0.95);transform-origin:50% 71%;">⇧</span><span class="k" style="margin:0 -1.2px;transform:scale(1.0,0.97);transform-origin:50% 71%;">⌘</span>F</span>
<span id="t45" class="t " style="left:613px;top:712px;height:42px;line-height:42px;font-size:27px;color:#bbbbbb;letter-spacing:-0.311px;">Replace in Files...</span>
<span class="t" style="right:543.4px;top:712px;height:42px;line-height:42px;font-size:27px;color:#bbbbbb;letter-spacing:0.6px;"><span class="k" style="margin:0 1.6px;transform:scale(1.63,0.95);transform-origin:50% 71%;">⇧</span><span class="k" style="margin:0 -1.2px;transform:scale(1.0,0.97);transform-origin:50% 71%;">⌘</span>R</span>
<span id="t46" class="t " style="left:613px;top:754px;height:42px;line-height:42px;font-size:27px;color:#bbbbbb;letter-spacing:-0.344px;">Analyze</span>
<svg class="r" style="left:1135px;top:766px" width="12" height="18" viewBox="0 0 12 18"><path d="M1.8 1.4 L9.6 9 L1.8 16.6" fill="none" stroke="#afb1b3" stroke-width="2.2"/></svg>
<div class="r" style="left:568px;top:804px;width:582px;height:2px;background:#555759;"></div>
<div class="r" style="left:548px;top:814px;width:622px;height:42px;background:#3e64c4;"></div>
<span id="t47" class="t " style="left:613px;top:814px;height:42px;line-height:42px;font-size:27px;color:#ffffff;letter-spacing:-0.008px;">Refactor</span>
<svg class="r" style="left:1135px;top:826px" width="12" height="18" viewBox="0 0 12 18"><path d="M1.8 1.4 L9.6 9 L1.8 16.6" fill="none" stroke="#ffffff" stroke-width="2.2"/></svg>
<div class="r" style="left:568px;top:864px;width:582px;height:2px;background:#555759;"></div>
<span id="t48" class="t " style="left:613px;top:874px;height:42px;line-height:42px;font-size:27px;color:#bbbbbb;letter-spacing:-0.257px;">Bookmarks</span>
<svg class="r" style="left:1135px;top:886px" width="12" height="18" viewBox="0 0 12 18"><path d="M1.8 1.4 L9.6 9 L1.8 16.6" fill="none" stroke="#afb1b3" stroke-width="2.2"/></svg>
<div class="r" style="left:568px;top:924px;width:582px;height:2px;background:#555759;"></div>
<span id="t49" class="t " style="left:613px;top:934px;height:42px;line-height:42px;font-size:27px;color:#bbbbbb;letter-spacing:-0.257px;">Reformat Code</span>
<span class="t" style="right:543.4px;top:934px;height:42px;line-height:42px;font-size:27px;color:#bbbbbb;letter-spacing:0.6px;"><span class="k" style="margin:0 -2.8px;transform:scale(0.82,1.27);transform-origin:50% 71%;">⌥</span><span class="k" style="margin:0 -1.2px;transform:scale(1.0,0.97);transform-origin:50% 71%;">⌘</span>L</span>
<span id="t50" class="t " style="left:613px;top:976px;height:42px;line-height:42px;font-size:27px;color:#bbbbbb;letter-spacing:0.197px;">Optimize Imports</span>
<span class="t" style="right:543.4px;top:976px;height:42px;line-height:42px;font-size:27px;color:#bbbbbb;letter-spacing:0.6px;"><span class="k" style="margin:0 0.6px;transform:translateY(1.5px) scale(1.6,1.25);transform-origin:50% 34%;-webkit-text-stroke:0;">⌃</span><span class="k" style="margin:0 -2.8px;transform:scale(0.82,1.27);transform-origin:50% 71%;">⌥</span>O</span>
<span id="t51" class="t " style="left:613px;top:1018px;height:42px;line-height:42px;font-size:27px;color:#bbbbbb;letter-spacing:-0.444px;">Delete...</span>
<div class="r" style="left:568px;top:1068px;width:582px;height:2px;background:#555759;"></div>
<span id="t52" class="t " style="left:613px;top:1078px;height:42px;line-height:42px;font-size:27px;color:#bbbbbb;letter-spacing:-0.513px;">Open In</span>
<svg class="r" style="left:1135px;top:1090px" width="12" height="18" viewBox="0 0 12 18"><path d="M1.8 1.4 L9.6 9 L1.8 16.6" fill="none" stroke="#afb1b3" stroke-width="2.2"/></svg>
<div class="r" style="left:568px;top:1128px;width:582px;height:2px;background:#555759;"></div>
<span id="t53" class="t " style="left:613px;top:1138px;height:42px;line-height:42px;font-size:27px;color:#bbbbbb;letter-spacing:0.078px;">Local History</span>
<svg class="r" style="left:1135px;top:1150px" width="12" height="18" viewBox="0 0 12 18"><path d="M1.8 1.4 L9.6 9 L1.8 16.6" fill="none" stroke="#afb1b3" stroke-width="2.2"/></svg>
<span id="t54" class="t " style="left:613px;top:1180px;height:42px;line-height:42px;font-size:27px;color:#bbbbbb;letter-spacing:-0.258px;">Git</span>
<svg class="r" style="left:1135px;top:1192px" width="12" height="18" viewBox="0 0 12 18"><path d="M1.8 1.4 L9.6 9 L1.8 16.6" fill="none" stroke="#afb1b3" stroke-width="2.2"/></svg>
<span id="t55" class="t " style="left:613px;top:1222px;height:42px;line-height:42px;font-size:27px;color:#bbbbbb;letter-spacing:-0.623px;">Repair IDE on File</span>
<span id="t56" class="t " style="left:613px;top:1264px;height:42px;line-height:42px;font-size:27px;color:#bbbbbb;letter-spacing:-0.138px;">Reload from Disk</span>
<div class="r" style="left:568px;top:1314px;width:582px;height:2px;background:#555759;"></div>
<span id="t57" class="t " style="left:613px;top:1324px;height:42px;line-height:42px;font-size:27px;color:#bbbbbb;letter-spacing:-0.076px;">Compare With...</span>
<span class="t" style="right:543.4px;top:1324px;height:42px;line-height:42px;font-size:27px;color:#bbbbbb;letter-spacing:0.6px;"><span class="k" style="margin:0 -1.2px;transform:scale(1.0,0.97);transform-origin:50% 71%;">⌘</span>D</span>
<div class="r" style="left:568px;top:1374px;width:582px;height:2px;background:#555759;"></div>
<span id="t58" class="t " style="left:613px;top:1384px;height:42px;line-height:42px;font-size:27px;color:#bbbbbb;letter-spacing:0.029px;">Mark Directory as</span>
<svg class="r" style="left:1135px;top:1396px" width="12" height="18" viewBox="0 0 12 18"><path d="M1.8 1.4 L9.6 9 L1.8 16.6" fill="none" stroke="#afb1b3" stroke-width="2.2"/></svg>
<div class="r" style="left:568px;top:1434px;width:582px;height:2px;background:#555759;"></div>
<span id="t59" class="t " style="left:613px;top:1444px;height:42px;line-height:42px;font-size:27px;color:#bbbbbb;letter-spacing:-0.102px;">Convert Java File to Kotlin File</span>
<span class="t" style="right:543.4px;top:1444px;height:42px;line-height:42px;font-size:27px;color:#bbbbbb;letter-spacing:0.6px;"><span class="k" style="margin:0 -2.8px;transform:scale(0.82,1.27);transform-origin:50% 71%;">⌥</span><span class="k" style="margin:0 1.6px;transform:scale(1.63,0.95);transform-origin:50% 71%;">⇧</span><span class="k" style="margin:0 -1.2px;transform:scale(1.0,0.97);transform-origin:50% 71%;">⌘</span>K</span>
<span id="t60" class="t " style="left:613px;top:1486px;height:42px;line-height:42px;font-size:27px;color:#bbbbbb;letter-spacing:-0.077px;">Analyze Dependencies...</span>
<svg class="r" style="left:571px;top:448px" width="30" height="30" viewBox="0 0 30 30"><circle cx="7.4" cy="6.1" r="4.1" fill="none" stroke="#afb1b3" stroke-width="2.5"/><circle cx="7.4" cy="21.7" r="4.1" fill="none" stroke="#afb1b3" stroke-width="2.5"/><path d="M29 1.2 L22.4 1.2 L9.6 18.4 L11.6 20.6 Z" fill="#afb1b3"/><path d="M29 27.4 L22.4 27.4 L9.6 9.4 L11.6 7.2 Z" fill="#afb1b3"/></svg>
<svg class="r" style="left:573px;top:489px" width="28" height="30" viewBox="0 0 28 30"><path d="M1 1 H19 V5 H5 V21 H1 Z" fill="#afb1b3"/><path d="M7 7 H25 V27 H7 Z" fill="#afb1b3"/><rect x="11" y="11.2" width="10" height="2.2" fill="#3e3f41"/><rect x="11" y="15.3" width="10" height="2.2" fill="#3e3f41"/><rect x="11" y="19.4" width="10" height="2.2" fill="#3e3f41"/></svg>
<svg class="r" style="left:575px;top:573px" width="24" height="30" viewBox="0 0 24 30"><path d="M1 3.4 H21 V27.4 H1 Z M5 9.4 V22.6 H17 V9.4 Z" fill="#afb1b3" fill-rule="evenodd"/><path d="M7 0.8 H15 V5 H7 Z" fill="#afb1b3"/><rect x="9.2" y="2.2" width="3.6" height="1.4" fill="#3e3f41"/></svg>
<svg class="r" style="left:572px;top:1271px" width="28" height="28" viewBox="0 0 28 28"><path d="M4.2 9.6 A10.3 10.3 0 0 1 23.9 10.6" fill="none" stroke="#afb1b3" stroke-width="3.4"/><path d="M23.8 18.4 A10.3 10.3 0 0 1 4.1 17.4" fill="none" stroke="#afb1b3" stroke-width="3.4"/><path d="M2 2.4 V12.4 H12 Z" fill="#afb1b3"/><path d="M26 25.6 V15.6 H16 Z" fill="#afb1b3"/></svg>
<svg class="r" style="left:571px;top:1332px" width="30" height="30" viewBox="0 0 30 30"><path d="M12.6 8 L21 0.4 V6 H29 V10 H21 V15.6 Z" fill="#4e94c9"/><path d="M17.4 20 L9 12.4 V18 H1 V22 H9 V27.6 Z" fill="#4e94c9"/></svg>
<svg class="r" style="left:569px;top:1490px" width="34" height="32" viewBox="0 0 34 32"><path d="M6.2 14.2 A10.2 10.2 0 1 1 20.6 20.8" fill="none" stroke="#afb1b3" stroke-width="3.6"/><path d="M20 19.6 L30.6 29.6" stroke="#afb1b3" stroke-width="4" fill="none"/><rect x="1" y="20" width="4" height="10" fill="#6cbf4f"/><rect x="7" y="16" width="4" height="14" fill="#8d99a2"/><rect x="13" y="20" width="4" height="10" fill="#56b5e6"/></svg>
<svg class="r" style="left:1125px;top:1028px" width="26" height="22" viewBox="0 0 26 22"><path d="M3.6 2.4 H14.2 Q15.4 2.4 16.2 3.3 L22.2 9.8 Q23.2 11 22.2 12.2 L16.2 18.7 Q15.4 19.6 14.2 19.6 H3.6 Q2.4 19.6 2.4 18.4 V3.6 Q2.4 2.4 3.6 2.4 Z" fill="none" stroke="#bbbbbb" stroke-width="2.3" stroke-linejoin="round"/><path d="M6.6 6.9 L14 15.1 M14 6.9 L6.6 15.1" stroke="#bbbbbb" stroke-width="2.2" stroke-linecap="round"/></svg>
<div class="r" style="left:1170px;top:802px;width:510px;height:456px;background:#3e3f41;box-sizing:border-box;border:1px solid #565859;box-shadow:0 14px 38px 4px rgba(0,0,0,0.25),0 0 3px rgba(0,0,0,0.22)"></div>
<div class="r" style="left:1172px;top:814px;width:506px;height:42px;background:#3e64c4;"></div>
<span id="t61" class="t " style="left:1201px;top:814px;height:42px;line-height:42px;font-size:27px;color:#ffffff;letter-spacing:-0.571px;">Rename...</span>
<span class="t" style="right:35.4px;top:814px;height:42px;line-height:42px;font-size:27px;color:#ffffff;letter-spacing:0.6px;"><span class="k" style="margin:0 1.6px;transform:scale(1.63,0.95);transform-origin:50% 71%;">⇧</span>F6</span>
<div class="r" style="left:1192px;top:864px;width:466px;height:2px;background:#555759;"></div>
<span id="t62" class="t " style="left:1201px;top:874px;height:42px;line-height:42px;font-size:27px;color:#bbbbbb;letter-spacing:-0.116px;">Move Package or Directory...</span>
<span class="t" style="right:35.4px;top:874px;height:42px;line-height:42px;font-size:27px;color:#bbbbbb;letter-spacing:0.6px;">F6</span>
<span id="t63" class="t " style="left:1201px;top:916px;height:42px;line-height:42px;font-size:27px;color:#bbbbbb;letter-spacing:-0.434px;">Copy Classes...</span>
<span class="t" style="right:35.4px;top:916px;height:42px;line-height:42px;font-size:27px;color:#bbbbbb;letter-spacing:0.6px;">F5</span>
<div class="r" style="left:1192px;top:966px;width:466px;height:2px;background:#555759;"></div>
<span id="t64" class="t " style="left:1201px;top:976px;height:42px;line-height:42px;font-size:27px;color:#bbbbbb;letter-spacing:-0.102px;">Convert Raw Types to Generics...</span>
<div class="r" style="left:1192px;top:1026px;width:466px;height:2px;background:#555759;"></div>
<span id="t65" class="t " style="left:1201px;top:1036px;height:42px;line-height:42px;font-size:27px;color:#bbbbbb;letter-spacing:-0.327px;">Remove Unused Resources...</span>
<span id="t66" class="t " style="left:1201px;top:1078px;height:42px;line-height:42px;font-size:27px;color:#bbbbbb;letter-spacing:0.220px;">Migrate to AppCompat...</span>
<span id="t67" class="t " style="left:1201px;top:1120px;height:42px;line-height:42px;font-size:27px;color:#bbbbbb;letter-spacing:0.207px;">Migrate to AndroidX...</span>
<span id="t68" class="t " style="left:1201px;top:1162px;height:42px;line-height:42px;font-size:27px;color:#bbbbbb;letter-spacing:0.078px;">Enable Instant Apps Support...</span>
<span id="t69" class="t " style="left:1201px;top:1204px;height:42px;line-height:42px;font-size:27px;color:#bbbbbb;letter-spacing:0.343px;">Add Right-to-Left (RTL) Support...</span>
</div></body></html>
